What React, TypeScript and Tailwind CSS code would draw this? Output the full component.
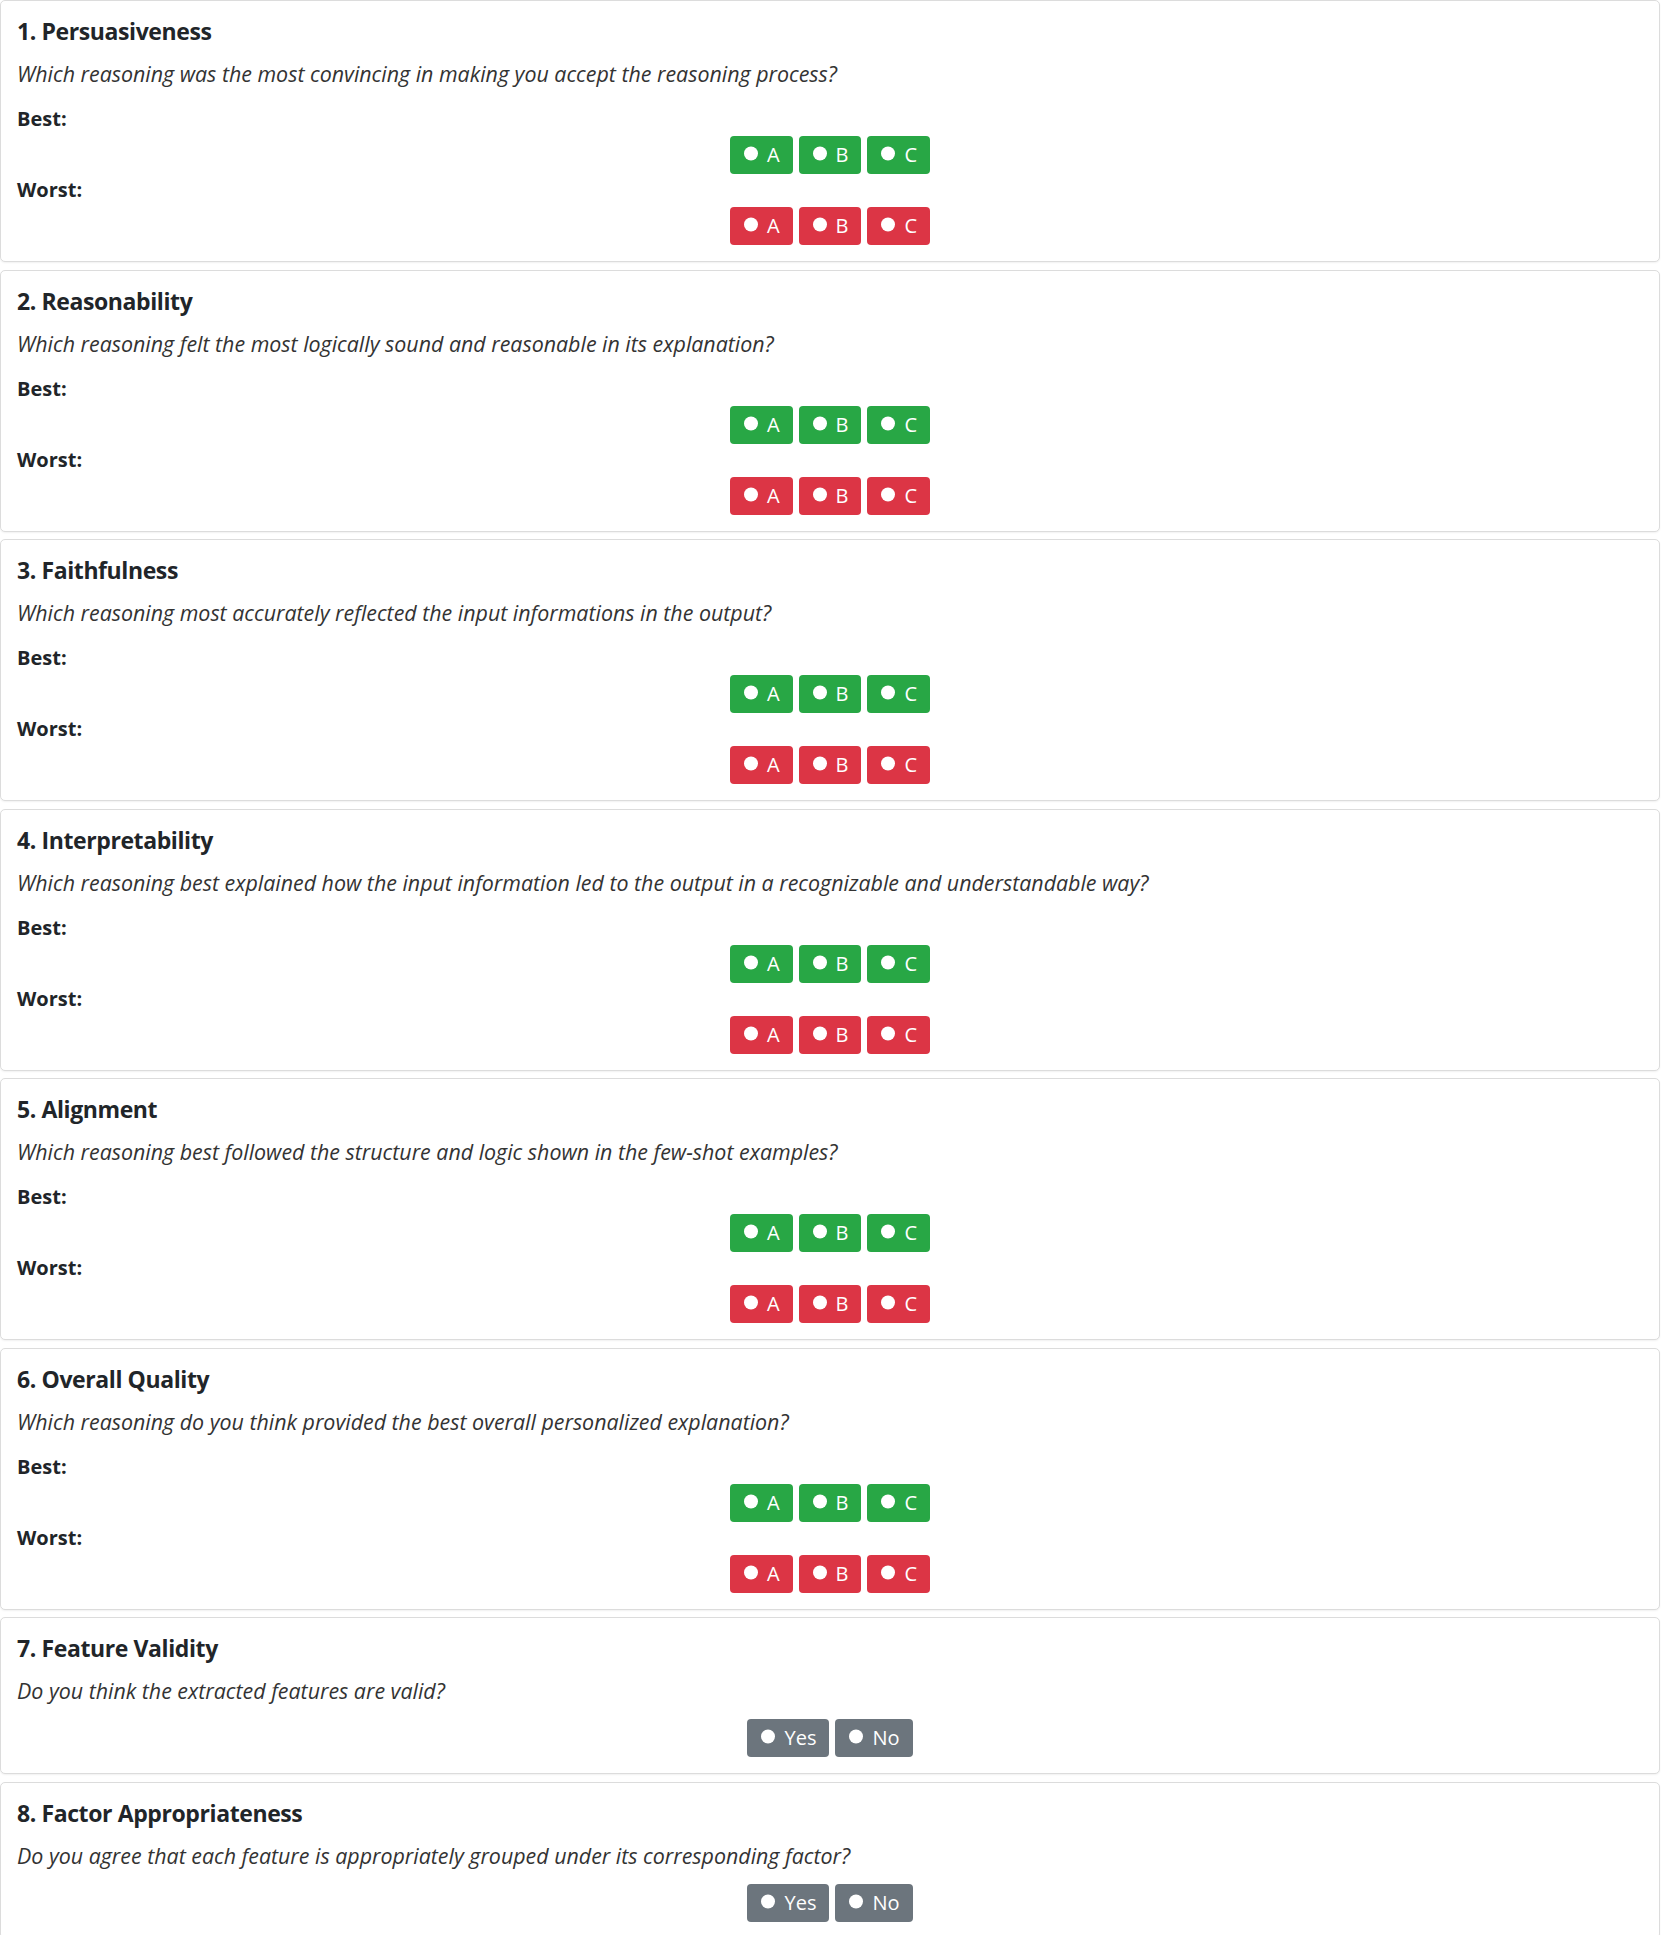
import React from "react";

type Choice = "A" | "B" | "C";

interface RankQuestion {
  title: string;
  prompt: string;
}

const RANK_QUESTIONS: RankQuestion[] = [
  { title: "1. Persuasiveness", prompt: "Which reasoning was the most convincing in making you accept the reasoning process?" },
  { title: "2. Reasonability", prompt: "Which reasoning felt the most logically sound and reasonable in its explanation?" },
  { title: "3. Faithfulness", prompt: "Which reasoning most accurately reflected the input informations in the output?" },
  {
    title: "4. Interpretability",
    prompt: "Which reasoning best explained how the input information led to the output in a recognizable and understandable way?",
  },
  { title: "5. Alignment", prompt: "Which reasoning best followed the structure and logic shown in the few-shot examples?" },
  { title: "6. Overall Quality", prompt: "Which reasoning do you think provided the best overall personalized explanation?" },
];

const YES_NO_QUESTIONS: RankQuestion[] = [
  { title: "7. Feature Validity", prompt: "Do you think the extracted features are valid?" },
  { title: "8. Factor Appropriateness", prompt: "Do you agree that each feature is appropriately grouped under its corresponding factor?" },
];

const CHOICES: Choice[] = ["A", "B", "C"];

// Bootstrap-ish button tones
const TONES = {
  success: "bg-[#28a745]",
  danger: "bg-[#dc3545]",
  secondary: "bg-[#6c757d]",
};

function RadioButton({ label, tone }: { label: string; tone: keyof typeof TONES }) {
  return (
    <button
      type="button"
      className={`${TONES[tone]} flex h-[38px] items-center rounded-[4px] pl-[14px] pr-[13px] text-[20px] leading-none text-white`}
    >
      <span className="mr-[9px] h-[14px] w-[14px] -translate-y-[1.5px] rounded-full bg-white" />
      <span>{label}</span>
    </button>
  );
}

function Card({ children }: { children: React.ReactNode }) {
  return (
    <div className="mb-[7.5px] rounded-[5px] border border-[#dcdcdc] bg-white px-[16px] pt-[16px] pb-[16px] shadow-[0_1px_2px_rgba(0,0,0,0.06)]">
      {children}
    </div>
  );
}

function Header({ q }: { q: RankQuestion }) {
  return (
    <>
      <h5 className="text-[23px] font-bold leading-[29px] tracking-[-0.4px] text-[#212529]">{q.title}</h5>
      <p className="mt-[13px] text-[21.4px] italic leading-[30px] text-[#333]">{q.prompt}</p>
    </>
  );
}

function RankCard({ q }: { q: RankQuestion }) {
  return (
    <Card>
      <Header q={q} />
      <div className="mt-[15px] text-[20px] font-bold leading-[30px] text-[#212529]">Best:</div>
      <div className="mt-[2px] flex justify-center gap-[6px]">
        {CHOICES.map((c) => (
          <RadioButton key={c} label={c} tone="success" />
        ))}
      </div>
      <div className="mt-[1px] text-[20px] font-bold leading-[30px] text-[#212529]">Worst:</div>
      <div className="mt-[2px] flex justify-center gap-[6px]">
        {CHOICES.map((c) => (
          <RadioButton key={c} label={c} tone="danger" />
        ))}
      </div>
    </Card>
  );
}

function YesNoCard({ q }: { q: RankQuestion }) {
  return (
    <Card>
      <Header q={q} />
      <div className="mt-[13px] flex justify-center gap-[6px]">
        <RadioButton label="Yes" tone="secondary" />
        <RadioButton label="No" tone="secondary" />
      </div>
    </Card>
  );
}

export default function App() {
  return (
    <div className="min-h-screen bg-white pr-[1px] font-['Open_Sans','Noto_Sans',sans-serif]">
      {RANK_QUESTIONS.map((q) => (
        <RankCard key={q.title} q={q} />
      ))}
      {YES_NO_QUESTIONS.map((q) => (
        <YesNoCard key={q.title} q={q} />
      ))}
    </div>
  );
}
